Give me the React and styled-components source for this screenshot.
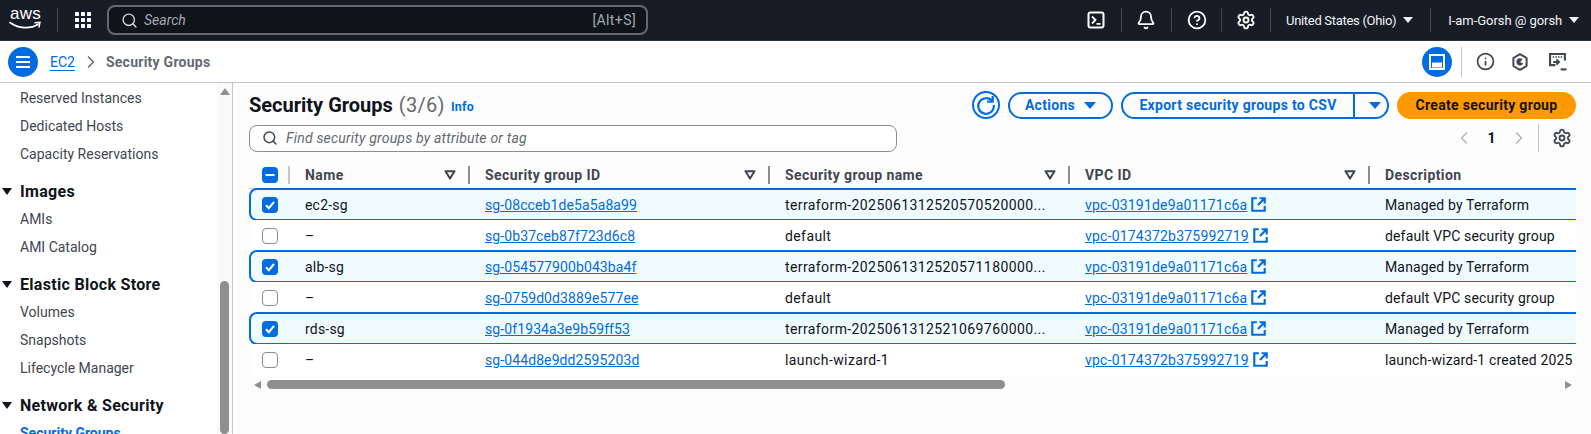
import React from "react";
import styled, { createGlobalStyle } from "styled-components";
import { Search, Bell, CircleHelp, Settings, Info, ChevronLeft, ChevronRight, ChevronRight as Crumb } from "lucide-react";

const GlobalStyle = createGlobalStyle`
html, body { margin: 0; padding: 0; height: 100%; overflow: hidden; background: #fff; }
body { font-family: Roboto, "Noto Sans", sans-serif; font-size: 14px; color: #0f141a; }
* { box-sizing: border-box; }
`;

const Page = styled.div`
display: flex;
flex-direction: column;
width: 1591px;
height: 434px;
overflow: hidden;
`;

const TopBar = styled.div`
display: flex;
align-items: center;
height: 41px;
flex: none;
background: #161d26;
border-bottom: 1px solid #2a3340;
color: #fff;
`;

const LogoBox = styled.div`
display: flex;
flex-direction: column;
align-items: center;
width: 33px;
margin-left: 9px;
margin-top: -3px;
`;

const LogoText = styled.span`
font-family: "Liberation Sans", sans-serif;
font-size: 17px;
line-height: 14px;
letter-spacing: 0.2px;
color: #fff;
`;

const TopSep = styled.div`
width: 1px;
height: 24px;
background: #424650;
flex: none;
margin-left: ${(p) => p.$ml || 0}px;
`;

const GridWrap = styled.div`
display: grid;
grid-template-columns: repeat(3, 4px);
grid-auto-rows: 4px;
gap: 2px;
margin-left: 17px;
`;

const GridDot = styled.span`
background: #fff;
border-radius: 0.5px;
`;

const SearchBox = styled.div`
display: flex;
align-items: center;
width: 541px;
height: 30px;
margin-left: 16px;
padding: 0 10px 0 12px;
background: #0f141a;
border: 2px solid #656871;
border-radius: 8px;
color: #b4b4bb;
`;

const SearchHint = styled.span`
font-style: italic;
font-size: 14px;
margin-left: 6px;
flex: 1;
color: #a5a8b0;
`;

const SearchKey = styled.span`
font-size: 14px;
letter-spacing: 0.4px;
color: #a5a8b0;
`;

const TopIcon = styled.div`
display: flex;
align-items: center;
justify-content: center;
width: 20px;
height: 20px;
flex: none;
margin-left: ${(p) => p.$ml}px;
margin-right: ${(p) => p.$mr}px;
`;

const Menu = styled.div`
display: flex;
align-items: center;
flex: none;
margin-left: ${(p) => p.$ml}px;
font-size: 13px;
letter-spacing: ${(p) => p.$ls || 0}px;
color: #f3f3f7;
`;

const Caret = styled.span`
width: 0;
height: 0;
margin-left: ${(p) => p.$ml || 7}px;
border-left: ${(p) => p.$s || 5}px solid transparent;
border-right: ${(p) => p.$s || 5}px solid transparent;
border-top: ${(p) => (p.$s || 5) + 1}px solid ${(p) => p.$color || "#f3f3f7"};
`;

const SubBar = styled.div`
display: flex;
align-items: center;
height: 42px;
flex: none;
padding: 0 0 0 8px;
background: #fff;
border-bottom: 1px solid #c6c6cd;
`;

const CircleBtn = styled.div`
display: flex;
align-items: center;
justify-content: center;
width: 30px;
height: 30px;
flex: none;
border-radius: 50%;
background: #006ce0;
`;

const CrumbLink = styled.a`
margin-left: 12px;
color: #006ce0;
font-size: 14px;
text-decoration: underline;
text-underline-offset: 3px;
`;

const CrumbText = styled.span`
margin-left: 5px;
flex: 1;
color: #656871;
font-weight: 700;
font-size: 14px;
letter-spacing: 0.25px;
`;

const SubSep = styled.div`
width: 1px;
height: 30px;
background: #c6c6cd;
margin: 0 13px 0 9px;
`;

const SubIcon = styled.div`
display: flex;
align-items: center;
justify-content: center;
width: 20px;
height: 20px;
margin-right: ${(p) => p.$mr}px;
`;

const Body = styled.div`
display: flex;
flex: 1;
min-height: 0;
`;

const Sidebar = styled.nav`
display: flex;
width: 233px;
flex: none;
border-right: 1px solid #c6c6cd;
background: #fff;
overflow: hidden;
`;

const NavList = styled.div`
flex: 1;
padding-top: 1px;
`;

const NavItem = styled.div`
height: 28px;
line-height: 28px;
padding-left: 20px;
color: ${(p) => (p.$active ? "#006ce0" : "#424650")};
font-weight: ${(p) => (p.$active ? 700 : 400)};
white-space: nowrap;
`;

const NavHead = styled.div`
display: flex;
align-items: center;
height: 28px;
margin-top: 9px;
padding-left: 2px;
color: #0f141a;
font-size: 16px;
letter-spacing: 0.3px;
font-weight: 700;
white-space: nowrap;
`;

const HeadCaret = styled.span`
width: 0;
height: 0;
margin-right: 8px;
border-left: 5px solid transparent;
border-right: 5px solid transparent;
border-top: 7px solid #0f141a;
`;

const ScrollTrack = styled.div`
display: flex;
flex-direction: column;
align-items: center;
width: 15px;
flex: none;
padding: 5px 3px 0 3px;
background: #fafafa;
`;

const ArrowUp = styled.span`
width: 0;
height: 0;
border-left: 5px solid transparent;
border-right: 5px solid transparent;
border-bottom: 7px solid #8f8f8f;
`;

const ScrollThumb = styled.div`
width: 9px;
height: 200px;
margin-top: 186px;
border-radius: 5px;
background: #8f8f8f;
`;

const Main = styled.main`
flex: 1;
min-width: 0;
padding: 8px 15px 0 16px;
background: #fdfdfd;
`;

const HeaderRow = styled.div`
display: flex;
align-items: center;
height: 28px;
`;

const Title = styled.h1`
margin: 0;
font-size: 20px;
font-weight: 700;
color: #0f141a;
`;

const Count = styled.span`
font-weight: 400;
color: #656871;
margin-left: 6px;
letter-spacing: 0.3px;
`;

const InfoLink = styled.a`
margin: 3px 0 0 6px;
font-size: 12.5px;
font-weight: 700;
letter-spacing: 0.2px;
color: #006ce0;
flex: 1;
`;

const RefreshBtn = styled.div`
display: flex;
align-items: center;
justify-content: center;
width: 28px;
height: 28px;
border: 2px solid #006ce0;
border-radius: 50%;
margin-right: 8px;
`;

const OutlineBtn = styled.div`
display: flex;
align-items: center;
justify-content: center;
width: ${(p) => p.$w}px;
height: 27px;
border: 2px solid #006ce0;
border-radius: 20px;
color: #006ce0;
font-weight: 700;
font-size: 14px;
letter-spacing: 0.3px;
white-space: nowrap;
`;

const SplitBtn = styled(OutlineBtn)`
margin-left: 8px;
justify-content: flex-start;
`;

const SplitMain = styled.span`
display: flex;
align-items: center;
width: 232px;
height: 100%;
justify-content: center;
border-right: 2px solid #006ce0;
`;

const SplitArrow = styled.span`
display: flex;
align-items: center;
justify-content: center;
width: 32px;
`;

const PrimaryBtn = styled.div`
display: flex;
align-items: center;
justify-content: center;
width: 179px;
height: 27px;
margin-left: 8px;
border-radius: 20px;
background: #ff9900;
color: #0f141a;
font-weight: 700;
font-size: 14px;
letter-spacing: 0.3px;
white-space: nowrap;
`;

const FilterRow = styled.div`
display: flex;
align-items: center;
height: 28px;
margin-top: 5px;
`;

const FilterBox = styled.div`
display: flex;
align-items: center;
width: 648px;
height: 27px;
padding: 0 12px;
flex: none;
border: 1px solid #8c8c94;
border-radius: 8px;
background: #fff;
`;

const FilterHint = styled.span`
margin-left: 8px;
font-style: italic;
letter-spacing: 0.2px;
color: #656871;
`;

const Pager = styled.div`
display: flex;
align-items: center;
margin-left: auto;
margin-right: 4px;
height: 28px;
`;

const PageNum = styled.span`
width: 27px;
text-align: center;
font-weight: 700;
font-size: 14px;
color: #0f141a;
margin: 0 4px;
`;

const PagerSep = styled.div`
width: 1px;
height: 28px;
background: #c6c6cd;
margin: 0 13px 0 9px;
`;

const Table = styled.div`
margin-top: 10px;
width: 100%;
overflow: hidden;
`;

const HeadRow = styled.div`
display: flex;
align-items: center;
height: 27px;
border-bottom: 1px solid #c6c6cd;
padding-bottom: 1px;
`;

const Row = styled.div`
display: flex;
align-items: center;
height: ${(p) => (p.$selected ? 33 : 31)}px;
margin: ${(p) => (p.$selected ? "-1px 0" : "0")};
position: relative;
background: ${(p) => (p.$selected ? "#f0fbff" : "#fff")};
border: ${(p) => (p.$selected ? "2px solid #006ce0" : "none")};
border-right: none;
border-radius: ${(p) => (p.$selected ? "8px 0 0 8px" : "0")};
margin-left: ${(p) => (p.$selected ? 0 : 2)}px;
`;

const CheckCell = styled.div`
display: flex;
align-items: center;
width: ${(p) => p.$w}px;
flex: none;
padding-left: ${(p) => p.$pad}px;
`;

const Check = styled.span`
display: flex;
align-items: center;
justify-content: center;
width: 16px;
height: 16px;
border-radius: 4px;
background: ${(p) => (p.$on ? "#006ce0" : "#fff")};
border: ${(p) => (p.$on ? "none" : "1px solid #8c8c94")};
`;

const HeadCell = styled.div`
display: flex;
align-items: center;
flex: none;
width: ${(p) => p.$w}px;
height: 18px;
padding: 0 12px 0 15px;
border-left: 2px solid ${(p) => (p.$light ? "#c6c6cd" : "#8c8c94")};
color: #424650;
font-weight: 700;
letter-spacing: 0.4px;
white-space: nowrap;
`;

const HeadLabel = styled.span`
flex: 1;
`;

const Cell = styled.div`
display: flex;
align-items: center;
flex: none;
width: ${(p) => p.$w}px;
padding: 0 12px 0 17px;
color: #0f141a;
letter-spacing: ${(p) => p.$ls || 0}px;
white-space: nowrap;
overflow: hidden;
`;

const CellLink = styled.a`
color: #006ce0;
text-decoration: underline;
`;

const HScroll = styled.div`
display: flex;
align-items: center;
height: 9px;
margin-top: 5px;
padding: 0 4px 0 5px;
`;

const ArrowLeft = styled.span`
width: 0;
height: 0;
border-top: 4px solid transparent;
border-bottom: 4px solid transparent;
border-right: 7px solid #8f8f8f;
`;

const ArrowRight = styled.span`
width: 0;
height: 0;
margin-left: auto;
border-top: 4px solid transparent;
border-bottom: 4px solid transparent;
border-left: 7px solid #8f8f8f;
`;

const HThumb = styled.div`
width: 738px;
height: 9px;
margin-left: 6px;
border-radius: 5px;
background: #8f8f8f;
`;

const SortIcon = () => (
  <svg width="12" height="10" viewBox="0 0 12 10">
    <path d="M1.5 1.2h9L6 8.6z" fill="none" stroke="#424650" strokeWidth="2" strokeLinejoin="round" />
  </svg>
);

const ExtIcon = () => (
  <svg width="15" height="15" viewBox="0 0 14 14" style={{ marginLeft: 4, flex: "none" }}>
    <path d="M5.5 1.2H1.2v11.6h11.6V8.5M8 1.2h4.8V6M12.5 1.5L6.5 7.5" fill="none" stroke="#006ce0" strokeWidth="2" />
  </svg>
);

const Tick = () => (
  <svg width="12" height="12" viewBox="0 0 12 12">
    <path d="M2 6.2l2.8 3L10 3" fill="none" stroke="#fff" strokeWidth="2" />
  </svg>
);

const Dash = () => (
  <svg width="12" height="12" viewBox="0 0 12 12">
    <path d="M1.5 6h9" fill="none" stroke="#fff" strokeWidth="2" />
  </svg>
);

const Smile = () => (
  <svg width="33" height="9" viewBox="0 0 33 9">
    <path d="M1 1.5C9 7.5 21 8.5 29 3.2" fill="none" stroke="#fff" strokeWidth="1.7" strokeLinecap="round" />
    <path d="M26 1.8L31 1.2 30 6" fill="none" stroke="#fff" strokeWidth="1.4" strokeLinecap="round" />
  </svg>
);

const TerminalIcon = () => (
  <svg width="18" height="18" viewBox="0 0 18 18">
    <rect x="1.5" y="1.5" width="15" height="15" rx="2" fill="none" stroke="#fff" strokeWidth="2" />
    <path d="M5 5.5L8.5 9 5 12.5M9.5 12.8h4" fill="none" stroke="#fff" strokeWidth="1.8" />
  </svg>
);

const Hamburger = () => (
  <svg width="14" height="14" viewBox="0 0 14 14">
    <path d="M0 2h14M0 7h14M0 12h14" stroke="#fff" strokeWidth="2" />
  </svg>
);

const PanelIcon = () => (
  <svg width="16" height="16" viewBox="0 0 16 16">
    <rect x="1" y="1" width="14" height="14" fill="none" stroke="#fff" strokeWidth="2" />
    <rect x="3" y="8.5" width="10" height="5" fill="#fff" />
  </svg>
);

const HexIcon = () => (
  <svg width="16" height="18" viewBox="0 0 16 18">
    <path d="M8 1.2l6.6 3.8v8L8 16.8 1.4 13V5z" fill="none" stroke="#424650" strokeWidth="2" strokeLinejoin="round" />
    <path d="M8 9L11.2 10.6A3.6 3.6 0 1 1 10.6 6.4z" fill="#424650" />
  </svg>
);

const ScreenIcon = () => (
  <svg width="18" height="18" viewBox="0 0 17 17">
    <path d="M6 11.5H1V1h14v6" fill="none" stroke="#424650" strokeWidth="2" />
    <path d="M3.5 3.8h1.4M6 3.8h1.4M8.5 3.8h1.4M11 3.8h1.4" stroke="#424650" strokeWidth="1.4" />
    <path d="M4 8.5h5M7 6l2.5 2.5L7 11" fill="none" stroke="#424650" strokeWidth="1.8" />
    <path d="M11 15.5h5.5" stroke="#424650" strokeWidth="2" />
  </svg>
);

const RefreshIcon = () => (
  <svg width="20" height="20" viewBox="0 0 18 18">
    <path d="M14.5 5.5A7 7 0 1 0 16 9" fill="none" stroke="#006ce0" strokeWidth="2" />
    <path d="M15 1v5h-5" fill="none" stroke="#006ce0" strokeWidth="2" />
  </svg>
);

const navSections = [
  { items: ["Reserved Instances", "Dedicated Hosts", "Capacity Reservations"] },
  { title: "Images", items: ["AMIs", "AMI Catalog"] },
  { title: "Elastic Block Store", items: ["Volumes", "Snapshots", "Lifecycle Manager"] },
  { title: "Network & Security", items: ["Security Groups"] },
];

const rows = [
  { on: true, name: "ec2-sg", id: "sg-08cceb1de5a5a8a99", group: "terraform-2025061312520570520000...", vpc: "vpc-03191de9a01171c6a", desc: "Managed by Terraform" },
  { on: false, name: "\u2013", id: "sg-0b37ceb87f723d6c8", group: "default", vpc: "vpc-0174372b375992719", desc: "default VPC security group" },
  { on: true, name: "alb-sg", id: "sg-054577900b043ba4f", group: "terraform-2025061312520571180000...", vpc: "vpc-03191de9a01171c6a", desc: "Managed by Terraform" },
  { on: false, name: "\u2013", id: "sg-0759d0d3889e577ee", group: "default", vpc: "vpc-03191de9a01171c6a", desc: "default VPC security group" },
  { on: true, name: "rds-sg", id: "sg-0f1934a3e9b59ff53", group: "terraform-2025061312521069760000...", vpc: "vpc-03191de9a01171c6a", desc: "Managed by Terraform" },
  { on: false, name: "\u2013", id: "sg-044d8e9dd2595203d", group: "launch-wizard-1", vpc: "vpc-0174372b375992719", desc: "launch-wizard-1 created 2025" },
];

const columns = [
  { label: "Name", w: 180 },
  { label: "Security group ID", w: 300 },
  { label: "Security group name", w: 300 },
  { label: "VPC ID", w: 300 },
];

const App = () => {
  return (
    <Page>
      <GlobalStyle />
      <TopBar>
        <LogoBox>
          <LogoText>aws</LogoText>
          <Smile />
        </LogoBox>
        <TopSep $ml={15} />
        <GridWrap>
          {Array.from({ length: 9 }).map((_, i) => (
            <GridDot key={i} />
          ))}
        </GridWrap>
        <SearchBox>
          <Search size={17} color="#d1d5db" strokeWidth={2} />
          <SearchHint>Search</SearchHint>
          <SearchKey>[Alt+S]</SearchKey>
        </SearchBox>
        <TopIcon $ml={438} $mr={15}><TerminalIcon /></TopIcon>
        <TopSep />
        <TopIcon $ml={14} $mr={15}><Bell size={20} color="#fff" strokeWidth={2.2} /></TopIcon>
        <TopSep />
        <TopIcon $ml={15} $mr={14}><CircleHelp size={20} color="#fff" strokeWidth={2.2} /></TopIcon>
        <TopSep />
        <TopIcon $ml={14} $mr={14}><Settings size={20} color="#fff" strokeWidth={2.2} /></TopIcon>
        <TopSep />
        <Menu $ml={15} $ls={-0.3}>United States (Ohio)<Caret /></Menu>
        <TopSep $ml={17} />
        <Menu $ml={17} $ls={-0.05}>I-am-Gorsh @ gorsh<Caret /></Menu>
      </TopBar>
      <SubBar>
        <CircleBtn><Hamburger /></CircleBtn>
        <CrumbLink>EC2</CrumbLink>
        <Crumb size={20} color="#656871" strokeWidth={1.8} style={{ marginLeft: 6 }} />
        <CrumbText>Security Groups</CrumbText>
        <CircleBtn><PanelIcon /></CircleBtn>
        <SubSep />
        <SubIcon $mr={15}><Info size={19} color="#424650" strokeWidth={2.2} /></SubIcon>
        <SubIcon $mr={18}><HexIcon /></SubIcon>
        <SubIcon $mr={23}><ScreenIcon /></SubIcon>
      </SubBar>
      <Body>
        <Sidebar>
          <NavList>
            {navSections.map((s, i) => (
              <div key={i}>
                {s.title && (
                  <NavHead>
                    <HeadCaret />
                    {s.title}
                  </NavHead>
                )}
                {s.items.map((item) => (
                  <NavItem key={item} $active={item === "Security Groups"}>{item}</NavItem>
                ))}
              </div>
            ))}
          </NavList>
          <ScrollTrack>
            <ArrowUp />
            <ScrollThumb />
          </ScrollTrack>
        </Sidebar>
        <Main>
          <HeaderRow>
            <Title>Security Groups<Count>(3/6)</Count></Title>
            <InfoLink>Info</InfoLink>
            <RefreshBtn><RefreshIcon /></RefreshBtn>
            <OutlineBtn $w={105}>Actions<Caret $color="#006ce0" $s={6} $ml={9} /></OutlineBtn>
            <SplitBtn $w={268}>
              <SplitMain>Export security groups to CSV</SplitMain>
              <SplitArrow><Caret $color="#006ce0" $s={6} $ml={0} /></SplitArrow>
            </SplitBtn>
            <PrimaryBtn>Create security group</PrimaryBtn>
          </HeaderRow>
          <FilterRow>
            <FilterBox>
              <Search size={16} color="#424650" strokeWidth={2.2} />
              <FilterHint>Find security groups by attribute or tag</FilterHint>
            </FilterBox>
            <Pager>
              <ChevronLeft size={20} color="#b4b4bb" strokeWidth={1.8} />
              <PageNum>1</PageNum>
              <ChevronRight size={20} color="#b4b4bb" strokeWidth={1.8} />
              <PagerSep />
              <Settings size={20} color="#424650" strokeWidth={2.2} />
            </Pager>
          </FilterRow>
          <Table>
            <HeadRow>
              <CheckCell $w={39} $pad={13}>
                <Check $on><Dash /></Check>
              </CheckCell>
              {columns.map((c, i) => (
                <HeadCell key={c.label} $w={c.w} $light={i === 0}>
                  <HeadLabel>{c.label}</HeadLabel>
                  <SortIcon />
                </HeadCell>
              ))}
              <HeadCell $w={220}><HeadLabel>Description</HeadLabel></HeadCell>
            </HeadRow>
            {rows.map((r) => (
              <Row key={r.id} $selected={r.on}>
                <CheckCell $w={37} $pad={11}>
                  <Check $on={r.on}>{r.on && <Tick />}</Check>
                </CheckCell>
                <Cell $w={180} $ls={0.2}>{r.name}</Cell>
                <Cell $w={300} $ls={0.1}><CellLink>{r.id}</CellLink></Cell>
                <Cell $w={300} $ls={0.4}>{r.group}</Cell>
                <Cell $w={300} $ls={0.2}><CellLink>{r.vpc}</CellLink><ExtIcon /></Cell>
                <Cell $w={220} $ls={0.15}>{r.desc}</Cell>
              </Row>
            ))}
            <HScroll>
              <ArrowLeft />
              <HThumb />
              <ArrowRight />
            </HScroll>
          </Table>
        </Main>
      </Body>
    </Page>
  );
};

export default App;
